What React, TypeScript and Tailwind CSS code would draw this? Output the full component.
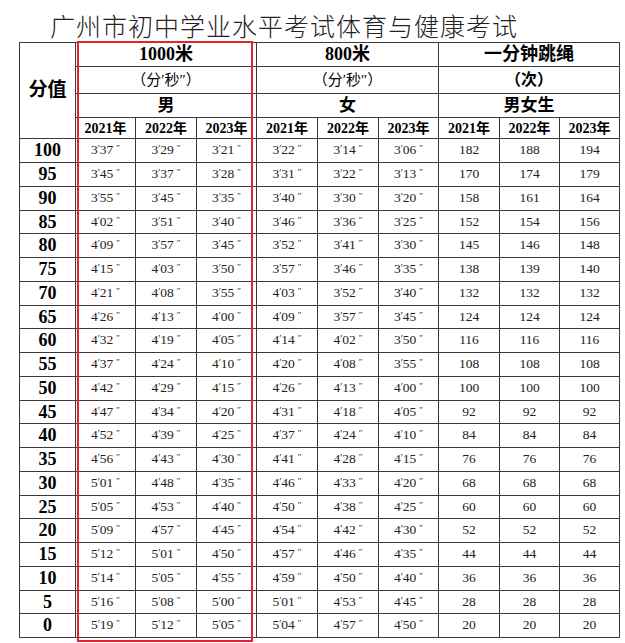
import React from 'react';

const serif = { fontFamily: '"Liberation Serif", "Noto Sans CJK SC", serif' };

type Row = [string, string[], string[], string[]];

const rows: Row[] = [
  ['100', ["3'37", "3'29", "3'21"], ["3'22", "3'14", "3'06"], ['182', '188', '194']],
  ['95', ["3'45", "3'37", "3'28"], ["3'31", "3'22", "3'13"], ['170', '174', '179']],
  ['90', ["3'55", "3'45", "3'35"], ["3'40", "3'30", "3'20"], ['158', '161', '164']],
  ['85', ["4'02", "3'51", "3'40"], ["3'46", "3'36", "3'25"], ['152', '154', '156']],
  ['80', ["4'09", "3'57", "3'45"], ["3'52", "3'41", "3'30"], ['145', '146', '148']],
  ['75', ["4'15", "4'03", "3'50"], ["3'57", "3'46", "3'35"], ['138', '139', '140']],
  ['70', ["4'21", "4'08", "3'55"], ["4'03", "3'52", "3'40"], ['132', '132', '132']],
  ['65', ["4'26", "4'13", "4'00"], ["4'09", "3'57", "3'45"], ['124', '124', '124']],
  ['60', ["4'32", "4'19", "4'05"], ["4'14", "4'02", "3'50"], ['116', '116', '116']],
  ['55', ["4'37", "4'24", "4'10"], ["4'20", "4'08", "3'55"], ['108', '108', '108']],
  ['50', ["4'42", "4'29", "4'15"], ["4'26", "4'13", "4'00"], ['100', '100', '100']],
  ['45', ["4'47", "4'34", "4'20"], ["4'31", "4'18", "4'05"], ['92', '92', '92']],
  ['40', ["4'52", "4'39", "4'25"], ["4'37", "4'24", "4'10"], ['84', '84', '84']],
  ['35', ["4'56", "4'43", "4'30"], ["4'41", "4'28", "4'15"], ['76', '76', '76']],
  ['30', ["5'01", "4'48", "4'35"], ["4'46", "4'33", "4'20"], ['68', '68', '68']],
  ['25', ["5'05", "4'53", "4'40"], ["4'50", "4'38", "4'25"], ['60', '60', '60']],
  ['20', ["5'09", "4'57", "4'45"], ["4'54", "4'42", "4'30"], ['52', '52', '52']],
  ['15', ["5'12", "5'01", "4'50"], ["4'57", "4'46", "4'35"], ['44', '44', '44']],
  ['10', ["5'14", "5'05", "4'55"], ["4'59", "4'50", "4'40"], ['36', '36', '36']],
  ['5', ["5'16", "5'08", "5'00"], ["5'01", "4'53", "4'45"], ['28', '28', '28']],
  ['0', ["5'19", "5'12", "5'05"], ["5'04", "4'57", "4'50"], ['20', '20', '20']],
];

const years = ['2021年', '2022年', '2023年'];

// header rows then 21 data rows (some 1px shorter so the bottom lands right)
const gridRows =
  '23px 26px 23px 20px ' +
  rows.map((_, i) => (i % 4 === 3 ? '22px' : '23px')).join(' ');

const Time: React.FC<{ v: string }> = ({ v }) => {
  const [m, s] = v.split("'");
  return (
    <span>
      {m}
      <span className="text-[10px] relative -top-[2px]">′</span>
      {s}
      <span className="ml-[3px] text-[9px] relative -top-[3px]">″</span>
    </span>
  );
};

const Cell: React.FC<{ className?: string; children?: React.ReactNode }> = ({ className = '', children }) => (
  <div className={`bg-white flex items-center justify-center ${className}`}>{children}</div>
);

export default function App() {
  return (
    <div className="w-[625px] h-[643px] bg-white overflow-hidden" style={serif}>
      <div
        className="h-[42px] pl-[50px] pt-[12px] text-[25px] leading-[26px] tracking-[1px] text-[#222] font-light whitespace-nowrap"
        style={{ fontFamily: '"Noto Sans CJK SC", sans-serif' }}
      >
        广州市初中学业水平考试体育与健康考试
      </div>

      <div className="relative ml-[19px] w-[601px]">
        <div
          className="grid gap-px p-px bg-[#3a3a3a] text-black"
          style={{
            gridTemplateColumns: '55px 59px 60px 59px 60px 60px 59px 60px 59px 59px',
            gridTemplateRows: gridRows,
          }}
        >
          {/* header */}
          <Cell className="row-span-4 text-[19px] font-bold">分值</Cell>
          <Cell className="col-span-3 text-[18px] font-bold">1000米</Cell>
          <Cell className="col-span-3 text-[18px] font-bold">800米</Cell>
          <Cell className="col-span-3 text-[18px] font-bold">一分钟跳绳</Cell>

          <Cell className="col-span-3 text-[15px]">（分′秒″）</Cell>
          <Cell className="col-span-3 text-[15px]">（分′秒″）</Cell>
          <Cell className="col-span-3 text-[16px] font-bold">（次）</Cell>

          <Cell className="col-span-3 text-[17px] font-bold">男</Cell>
          <Cell className="col-span-3 text-[17px] font-bold">女</Cell>
          <Cell className="col-span-3 text-[17px] font-bold">男女生</Cell>

          {[0, 1, 2].map(g =>
            years.map(y => (
              <Cell key={`${g}-${y}`} className="text-[14px] font-bold">
                {y}
              </Cell>
            ))
          )}

          {/* data */}
          {rows.map(([score, boys, girls, rope]) => (
            <React.Fragment key={score}>
              <Cell className="text-[18px] font-bold">{score}</Cell>
              {boys.map((v, i) => (
                <Cell key={`b${i}`} className="text-[13.5px] text-[#222]">
                  <Time v={v} />
                </Cell>
              ))}
              {girls.map((v, i) => (
                <Cell key={`g${i}`} className="text-[13.5px] text-[#222]">
                  <Time v={v} />
                </Cell>
              ))}
              {rope.map((v, i) => (
                <Cell key={`r${i}`} className="text-[13.5px] text-[#222]">
                  {v}
                </Cell>
              ))}
            </React.Fragment>
          ))}
        </div>

        {/* red highlight round the 1000m columns */}
        <div className="absolute left-[58px] top-[-1px] w-[176px] h-[601px] border-2 border-[#e3242b] pointer-events-none" />
      </div>
    </div>
  );
}
